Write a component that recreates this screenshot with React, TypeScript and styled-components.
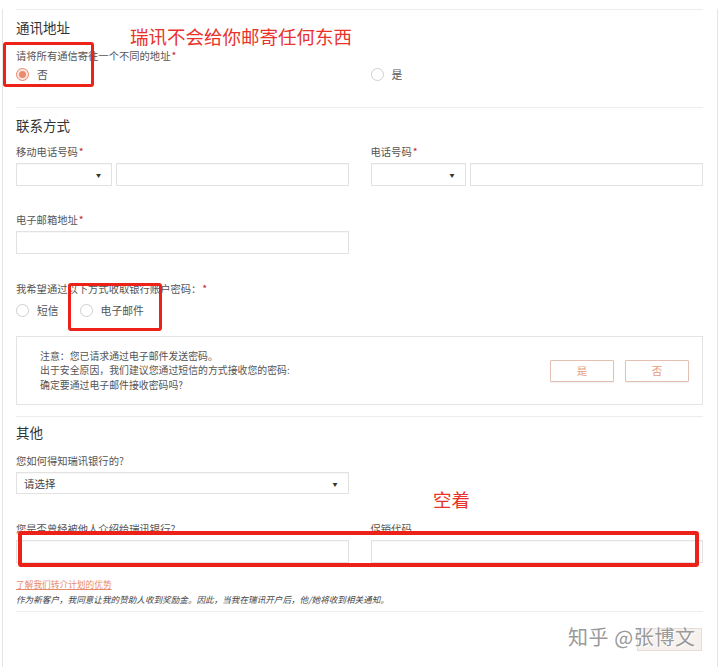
import React from "react";
import styled, { createGlobalStyle } from "styled-components";

const GlobalStyle = createGlobalStyle`
  html, body {
    margin: 0;
    padding: 0;
    background: #fff;
  }
  body {
    font-family: "Noto Sans CJK SC", "Noto Sans", sans-serif;
    color: #555;
  }
`;

const Page = styled.div`
  position: relative;
  width: 720px;
  height: 667px;
  overflow: hidden;
`;

const Card = styled.div`
  box-sizing: border-box;
  margin-left: 2px;
  width: 716px;
  height: 667px;
  border: 1px solid #e4e4e4;
  border-top: none;
  padding: 0 14px 0 13px;
`;

const Divider = styled.div<{ $top: number }>`
  height: 1px;
  background: #ececec;
  margin-top: ${(p) => p.$top}px;
`;

const SectionTitle = styled.h3<{ $top?: number }>`
  margin: ${(p) => p.$top ?? 7}px 0 0;
  font-size: 13.5px;
  line-height: 20px;
  font-weight: 400;
  color: #333;
`;

const Label = styled.div<{ $top: number }>`
  margin-top: ${(p) => p.$top}px;
  font-size: 10.3px;
  line-height: 16px;
  color: #555;
  white-space: nowrap;
`;

const Star = styled.span`
  color: #b23;
  margin-left: 1px;
`;

const TwoCol = styled.div`
  display: grid;
  grid-template-columns: 1fr 1fr;
  column-gap: 22px;
`;

const Col = styled.div``;

const RadioRow = styled.div<{ $top: number }>`
  display: flex;
  align-items: center;
  gap: 21px;
  margin-top: ${(p) => p.$top}px;
  height: 16px;
`;

const RadioItem = styled.label`
  display: flex;
  align-items: center;
  gap: 8px;
  font-size: 10.8px;
  color: #555;
`;

const RadioCircle = styled.span<{ $checked?: boolean }>`
  box-sizing: border-box;
  width: 13px;
  height: 13px;
  border-radius: 50%;
  border: 1px solid ${(p) => (p.$checked ? "#e8876c" : "#cfcfcf")};
  background: ${(p) => (p.$checked ? "#fbe6df" : "#fff")};
  display: flex;
  align-items: center;
  justify-content: center;
  &::after {
    content: "";
    width: 7px;
    height: 7px;
    border-radius: 50%;
    background: ${(p) => (p.$checked ? "#ea8b70" : "transparent")};
  }
`;

const FieldRow = styled.div`
  display: flex;
  gap: 4px;
  margin-top: 3px;
`;

const Box = styled.div<{ $w?: number; $h?: number; $top?: number }>`
  box-sizing: border-box;
  height: ${(p) => p.$h ?? 23}px;
  ${(p) => (p.$w ? `width: ${p.$w}px; flex: none;` : "flex: 1;")}
  margin-top: ${(p) => p.$top ?? 0}px;
  border: 1px solid #e2e2e2;
  box-shadow: inset 0 1px 1px rgba(0, 0, 0, 0.03);
  background: #fff;
  display: flex;
  align-items: center;
  justify-content: space-between;
  padding: 0 10px 0 7px;
  font-size: 10.5px;
  color: #444;
`;

const Arrow = styled.span`
  font-size: 5px;
  line-height: 5px;
  color: #333;
`;

const Notice = styled.div`
  box-sizing: border-box;
  margin-top: 18px;
  height: 69px;
  border: 1px solid #e4e4e4;
  display: flex;
  align-items: center;
  justify-content: space-between;
  padding: 0 13px 0 23px;
`;

const NoticeText = styled.div`
  font-size: 9.9px;
  line-height: 14.5px;
  color: #555;
`;

const ButtonGroup = styled.div`
  display: flex;
  gap: 11px;
`;

const GhostButton = styled.button<{ $w?: number }>`
  box-sizing: border-box;
  width: ${(p) => p.$w ?? 64}px;
  height: 22px;
  border: 1px solid #e3c0b3;
  border-radius: 1px;
  background: #fff;
  color: #e59a80;
  font-family: inherit;
  font-size: 10.5px;
  padding: 0;
  box-shadow: 0 1px 1px rgba(0, 0, 0, 0.06);
`;

const Link = styled.a`
  display: block;
  margin-top: 15px;
  font-size: 8.7px;
  line-height: 14px;
  color: #e8896c;
  text-decoration: underline;
`;

const Hint = styled.div`
  font-size: 8.6px;
  line-height: 14px;
  font-style: italic;
  color: #444;
  white-space: nowrap;
`;

const Footer = styled.div`
  display: flex;
  justify-content: flex-end;
  padding-top: 16px;
`;

const FaintButton = styled.div`
  box-sizing: border-box;
  width: 65px;
  height: 23px;
  margin-right: 1px;
  border: 1px solid #e8dcd6;
  background: #f7f1ee;
`;

const Watermark = styled.div`
  position: absolute;
  left: 568px;
  top: 622px;
  font-size: 20px;
  line-height: 30px;
  color: #9a9a9a;
  letter-spacing: 0.6px;
  text-shadow: 1px 1px 0 #fff, -1px 0 0 rgba(255, 255, 255, 0.8);
  white-space: nowrap;
`;

const RedBox = styled.div<{ $x: number; $y: number; $w: number; $h: number; $b?: number }>`
  position: absolute;
  box-sizing: border-box;
  left: ${(p) => p.$x}px;
  top: ${(p) => p.$y}px;
  width: ${(p) => p.$w}px;
  height: ${(p) => p.$h}px;
  border: ${(p) => p.$b ?? 3}px solid #ec2219;
  border-radius: 3px;
`;

const RedNote = styled.div<{ $x: number; $y: number }>`
  position: absolute;
  left: ${(p) => p.$x}px;
  top: ${(p) => p.$y}px;
  font-size: 18.5px;
  line-height: 24px;
  color: #e8332b;
  white-space: nowrap;
`;

export default function App() {
  return (
    <Page>
      <GlobalStyle />
      <Card>
        <Divider $top={9} />
        <SectionTitle>通讯地址</SectionTitle>
        <Label $top={11}>
          请将所有通信寄往一个不同的地址<Star>*</Star>
        </Label>
        <TwoCol>
          <RadioRow $top={2}>
            <RadioItem>
              <RadioCircle $checked />否
            </RadioItem>
          </RadioRow>
          <RadioRow $top={2}>
            <RadioItem>
              <RadioCircle />是
            </RadioItem>
          </RadioRow>
        </TwoCol>

        <Divider $top={25} />
        <SectionTitle>联系方式</SectionTitle>
        <TwoCol>
          <Col>
            <Label $top={9}>
              移动电话号码<Star>*</Star>
            </Label>
            <FieldRow>
              <Box $w={96}>
                <span />
                <Arrow>▼</Arrow>
              </Box>
              <Box />
            </FieldRow>
          </Col>
          <Col>
            <Label $top={9}>
              电话号码<Star>*</Star>
            </Label>
            <FieldRow>
              <Box $w={95}>
                <span />
                <Arrow>▼</Arrow>
              </Box>
              <Box />
            </FieldRow>
          </Col>
        </TwoCol>
        <TwoCol>
          <Col>
            <Label $top={26}>
              电子邮箱地址<Star>*</Star>
            </Label>
            <Box $top={3} />
          </Col>
        </TwoCol>
        <Label $top={27}>
          我希望通过以下方式收取银行账户密码：<Star>*</Star>
        </Label>
        <RadioRow $top={5}>
          <RadioItem>
            <RadioCircle />短信
          </RadioItem>
          <RadioItem>
            <RadioCircle />电子邮件
          </RadioItem>
        </RadioRow>
        <Notice>
          <NoticeText>
            注意：您已请求通过电子邮件发送密码。
            <br />
            出于安全原因，我们建议您通过短信的方式接收您的密码:
            <br />
            确定要通过电子邮件接收密码吗?
          </NoticeText>
          <ButtonGroup>
            <GhostButton>是</GhostButton>
            <GhostButton>否</GhostButton>
          </ButtonGroup>
        </Notice>

        <Divider $top={11} />
        <SectionTitle $top={5}>其他</SectionTitle>
        <TwoCol>
          <Col>
            <Label $top={11}>您如何得知瑞讯银行的?</Label>
            <Box $top={3} $h={22}>
              <span>请选择</span>
              <Arrow>▼</Arrow>
            </Box>
          </Col>
        </TwoCol>
        <TwoCol>
          <Col>
            <Label $top={27}>您是否曾经被他人介绍给瑞讯银行?</Label>
            <Box $top={3} />
          </Col>
          <Col>
            <Label $top={27}>促销代码</Label>
            <Box $top={3} />
          </Col>
        </TwoCol>
        <Link>了解我们转介计划的优势</Link>
        <Hint>
          作为新客户，我同意让我的赞助人收到奖励金。因此，当我在瑞讯开户后，他/她将收到相关通知。
        </Hint>
        <Divider $top={5} />
        <Footer>
          <FaintButton />
        </Footer>
      </Card>

      <RedBox $x={3} $y={42} $w={91} $h={45} />
      <RedNote $x={130} $y={24}>瑞讯不会给你邮寄任何东西</RedNote>
      <RedBox $x={68} $y={283} $w={94} $h={48} />
      <RedNote $x={433} $y={487}>空着</RedNote>
      <RedBox $x={18} $y={531} $w={681} $h={36} $b={4} />
      <Watermark>知乎 @张博文</Watermark>
    </Page>
  );
}
